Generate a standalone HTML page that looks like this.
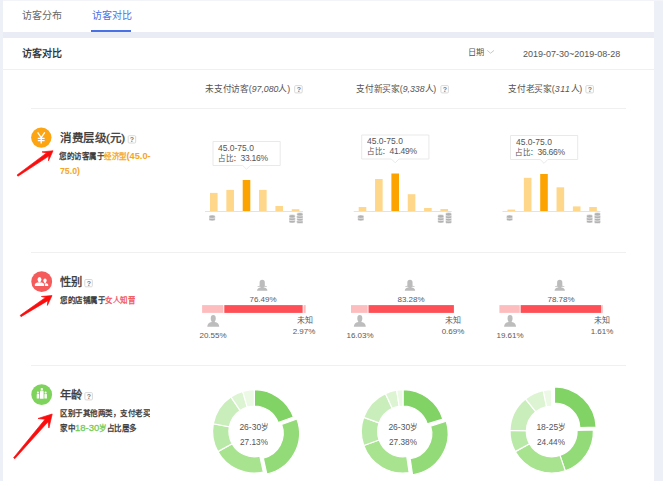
<!DOCTYPE html>
<html lang="zh-CN"><head><meta charset="utf-8">
<style>
*{margin:0;padding:0;box-sizing:border-box}
html,body{width:663px;height:481px;overflow:hidden;background:#eef0f8;font-family:"Liberation Sans",sans-serif;color:#333}
.a{position:absolute;white-space:nowrap}
.c{text-align:center}
i{font-style:italic}
svg{position:absolute;left:0;top:0}
</style></head><body>
<svg width="663" height="481" viewBox="0 0 663 481">
<rect x="3" y="0" width="660" height="1" fill="#f3f4f9"/>
<rect x="3" y="32" width="651" height="6" fill="#e9ecf4"/>
<rect x="3" y="1" width="651" height="31" fill="#fff"/>
<rect x="3" y="38" width="651" height="443" fill="#fff"/>
<rect x="91" y="30" width="40" height="2" fill="#4a70e6"/>
<rect x="3" y="69" width="651" height="1" fill="#f0f0f0"/>
<path d="M487.2 50.4 L490.6 53.2 L494 50.4" fill="none" stroke="#bbb" stroke-width="0.8"/>
<rect x="31" y="108" width="595" height="1" fill="#f0f0f0"/>
<rect x="31" y="252" width="595" height="1" fill="#f0f0f0"/>
<rect x="31" y="365" width="595" height="1" fill="#f0f0f0"/>
<rect x="294.7" y="85.6" width="7.5" height="7.300000000000001" rx="1" fill="#fff" stroke="#d4d4d4" stroke-width="0.9"/>
<rect x="440.9" y="85.6" width="7.5" height="7.300000000000001" rx="1" fill="#fff" stroke="#d4d4d4" stroke-width="0.9"/>
<rect x="585.9" y="85.6" width="7.5" height="7.300000000000001" rx="1" fill="#fff" stroke="#d4d4d4" stroke-width="0.9"/>
<rect x="128.2" y="135.7" width="7.5" height="7.300000000000001" rx="1" fill="#fff" stroke="#d4d4d4" stroke-width="0.9"/>
<rect x="84.8" y="279.5" width="7.5" height="7.300000000000001" rx="1" fill="#fff" stroke="#d4d4d4" stroke-width="0.9"/>
<rect x="84.9" y="392.6" width="7.5" height="7.300000000000001" rx="1" fill="#fff" stroke="#d4d4d4" stroke-width="0.9"/>
<circle cx="41.3" cy="137.6" r="10.2" fill="#fca412"/>
<g stroke="#fff" stroke-width="1.35" fill="none"><path d="M37.6 132.4 L41.2 137.6 L44.8 132.4 M41.2 137.6 V143.4 M37.8 138.4 H44.6 M37.8 140.6 H44.6"/></g>
<circle cx="41.7" cy="281.7" r="10.4" fill="#f55b5b"/>
<g fill="#fff"><ellipse cx="39.5" cy="279.4" rx="1.95" ry="2.5"/><rect x="38.7" y="281" width="1.6" height="1.6"/><path d="M34.9 286 V284.6 Q35.1 282.8 37.2 282.4 H41.8 Q43.9 282.8 44.1 284.6 V286 Z"/><ellipse cx="45" cy="280.6" rx="1.65" ry="2.1"/><rect x="44.3" y="282" width="1.4" height="1.4"/><path d="M44.9 286 V284.8 Q45 283.4 45.8 283.2 H46.3 Q48 283.4 48.2 284.8 V286 Z" /></g>
<circle cx="41.7" cy="394.6" r="10.4" fill="#7dd35b"/>
<g fill="#fff"><circle cx="41.8" cy="389.1" r="1.2"/><path d="M40 398.8 V391.8 Q40 390.6 41.2 390.6 H42.4 Q43.6 390.6 43.6 391.8 V398.8 Z"/><circle cx="37.9" cy="392.5" r="1.05"/><path d="M36.7 398.6 V394.7 Q36.7 393.8 37.6 393.8 H38.3 Q39.2 393.8 39.2 394.7 V398.6 Z"/><circle cx="45.6" cy="392.5" r="1.05"/><path d="M44.4 398.6 V394.7 Q44.4 393.8 45.3 393.8 H46 Q46.9 393.8 46.9 394.7 V398.6 Z"/></g>
<polygon points="53.00,150.80 42.00,151.90 46.57,152.91 17.07,174.99 17.93,176.21 48.80,156.11 48.50,160.80" fill="#fb0d0d" stroke="#fb0d0d" stroke-width="0.7" stroke-linejoin="round"/>
<polygon points="52.00,295.60 41.40,296.50 45.64,297.41 20.19,315.37 21.01,316.63 47.77,300.68 47.40,305.40" fill="#fb0d0d" stroke="#fb0d0d" stroke-width="0.7" stroke-linejoin="round"/>
<polygon points="52.20,414.00 38.00,418.50 45.08,419.29 13.63,457.71 14.77,458.69 48.04,421.83 48.90,428.00" fill="#fb0d0d" stroke="#fb0d0d" stroke-width="0.7" stroke-linejoin="round"/>
<rect x="205.0" y="211" width="98" height="0.8" fill="#dcdcdc"/>
<rect x="210.00" y="192.9" width="7.6" height="18.10" fill="#fed78a"/>
<rect x="226.35" y="189.9" width="7.6" height="21.10" fill="#fed78a"/>
<rect x="242.70" y="180" width="7.6" height="31.00" fill="#fda300"/>
<rect x="259.05" y="189.9" width="7.6" height="21.10" fill="#fed78a"/>
<rect x="275.40" y="206" width="7.6" height="5.00" fill="#fed78a"/>
<rect x="291.75" y="209.2" width="7.6" height="1.80" fill="#fed78a"/>
<path d="M209.00 218.60 A3.1 1.2 0 0 1 215.20 218.60 V219.70 A3.1 1.2 0 0 1 209.00 219.70 Z" fill="#b2b2b2" stroke="#fff" stroke-width="0.6"/>
<path d="M209.00 216.10 A3.1 1.2 0 0 1 215.20 216.10 V217.20 A3.1 1.2 0 0 1 209.00 217.20 Z" fill="#b2b2b2" stroke="#fff" stroke-width="0.6"/>
<path d="M289.00 220.80 A3.1 1.2 0 0 1 295.20 220.80 V221.90 A3.1 1.2 0 0 1 289.00 221.90 Z" fill="#b2b2b2" stroke="#fff" stroke-width="0.6"/>
<path d="M289.00 218.30 A3.1 1.2 0 0 1 295.20 218.30 V219.40 A3.1 1.2 0 0 1 289.00 219.40 Z" fill="#b2b2b2" stroke="#fff" stroke-width="0.6"/>
<path d="M289.00 215.80 A3.1 1.2 0 0 1 295.20 215.80 V216.90 A3.1 1.2 0 0 1 289.00 216.90 Z" fill="#b2b2b2" stroke="#fff" stroke-width="0.6"/>
<path d="M296.80 221.30 A3.1 1.2 0 0 1 303.00 221.30 V222.40 A3.1 1.2 0 0 1 296.80 222.40 Z" fill="#b2b2b2" stroke="#fff" stroke-width="0.6"/>
<path d="M296.80 218.80 A3.1 1.2 0 0 1 303.00 218.80 V219.90 A3.1 1.2 0 0 1 296.80 219.90 Z" fill="#b2b2b2" stroke="#fff" stroke-width="0.6"/>
<path d="M296.80 216.30 A3.1 1.2 0 0 1 303.00 216.30 V217.40 A3.1 1.2 0 0 1 296.80 217.40 Z" fill="#b2b2b2" stroke="#fff" stroke-width="0.6"/>
<path d="M296.80 213.80 A3.1 1.2 0 0 1 303.00 213.80 V214.90 A3.1 1.2 0 0 1 296.80 214.90 Z" fill="#b2b2b2" stroke="#fff" stroke-width="0.6"/>
<path d="M213.0 141.5 H280.2 V165.5 H250.3 L246.5 169.3 L242.7 165.5 H213.0 Z" fill="#fff" stroke="#e6e6e6" stroke-width="0.9"/>
<rect x="353.7" y="211" width="98" height="0.8" fill="#dcdcdc"/>
<rect x="358.70" y="207" width="7.6" height="4.00" fill="#fed78a"/>
<rect x="375.05" y="179" width="7.6" height="32.00" fill="#fed78a"/>
<rect x="391.40" y="173.5" width="7.6" height="37.50" fill="#fda300"/>
<rect x="407.75" y="194.2" width="7.6" height="16.80" fill="#fed78a"/>
<rect x="424.10" y="208" width="7.6" height="3.00" fill="#fed78a"/>
<rect x="440.45" y="209" width="7.6" height="2.00" fill="#fed78a"/>
<path d="M357.70 218.60 A3.1 1.2 0 0 1 363.90 218.60 V219.70 A3.1 1.2 0 0 1 357.70 219.70 Z" fill="#b2b2b2" stroke="#fff" stroke-width="0.6"/>
<path d="M357.70 216.10 A3.1 1.2 0 0 1 363.90 216.10 V217.20 A3.1 1.2 0 0 1 357.70 217.20 Z" fill="#b2b2b2" stroke="#fff" stroke-width="0.6"/>
<path d="M437.70 220.80 A3.1 1.2 0 0 1 443.90 220.80 V221.90 A3.1 1.2 0 0 1 437.70 221.90 Z" fill="#b2b2b2" stroke="#fff" stroke-width="0.6"/>
<path d="M437.70 218.30 A3.1 1.2 0 0 1 443.90 218.30 V219.40 A3.1 1.2 0 0 1 437.70 219.40 Z" fill="#b2b2b2" stroke="#fff" stroke-width="0.6"/>
<path d="M437.70 215.80 A3.1 1.2 0 0 1 443.90 215.80 V216.90 A3.1 1.2 0 0 1 437.70 216.90 Z" fill="#b2b2b2" stroke="#fff" stroke-width="0.6"/>
<path d="M445.50 221.30 A3.1 1.2 0 0 1 451.70 221.30 V222.40 A3.1 1.2 0 0 1 445.50 222.40 Z" fill="#b2b2b2" stroke="#fff" stroke-width="0.6"/>
<path d="M445.50 218.80 A3.1 1.2 0 0 1 451.70 218.80 V219.90 A3.1 1.2 0 0 1 445.50 219.90 Z" fill="#b2b2b2" stroke="#fff" stroke-width="0.6"/>
<path d="M445.50 216.30 A3.1 1.2 0 0 1 451.70 216.30 V217.40 A3.1 1.2 0 0 1 445.50 217.40 Z" fill="#b2b2b2" stroke="#fff" stroke-width="0.6"/>
<path d="M445.50 213.80 A3.1 1.2 0 0 1 451.70 213.80 V214.90 A3.1 1.2 0 0 1 445.50 214.90 Z" fill="#b2b2b2" stroke="#fff" stroke-width="0.6"/>
<path d="M361.7 135.0 H428.9 V159.0 H399.0 L395.2 162.8 L391.4 159.0 H361.7 Z" fill="#fff" stroke="#e6e6e6" stroke-width="0.9"/>
<rect x="502.5" y="211" width="98" height="0.8" fill="#dcdcdc"/>
<rect x="507.50" y="209.6" width="7.6" height="1.40" fill="#fed78a"/>
<rect x="523.85" y="177.8" width="7.6" height="33.20" fill="#fed78a"/>
<rect x="540.20" y="174" width="7.6" height="37.00" fill="#fda300"/>
<rect x="556.55" y="187.3" width="7.6" height="23.70" fill="#fed78a"/>
<rect x="572.90" y="206.4" width="7.6" height="4.60" fill="#fed78a"/>
<rect x="589.25" y="207" width="7.6" height="4.00" fill="#fed78a"/>
<path d="M506.50 218.60 A3.1 1.2 0 0 1 512.70 218.60 V219.70 A3.1 1.2 0 0 1 506.50 219.70 Z" fill="#b2b2b2" stroke="#fff" stroke-width="0.6"/>
<path d="M506.50 216.10 A3.1 1.2 0 0 1 512.70 216.10 V217.20 A3.1 1.2 0 0 1 506.50 217.20 Z" fill="#b2b2b2" stroke="#fff" stroke-width="0.6"/>
<path d="M586.50 220.80 A3.1 1.2 0 0 1 592.70 220.80 V221.90 A3.1 1.2 0 0 1 586.50 221.90 Z" fill="#b2b2b2" stroke="#fff" stroke-width="0.6"/>
<path d="M586.50 218.30 A3.1 1.2 0 0 1 592.70 218.30 V219.40 A3.1 1.2 0 0 1 586.50 219.40 Z" fill="#b2b2b2" stroke="#fff" stroke-width="0.6"/>
<path d="M586.50 215.80 A3.1 1.2 0 0 1 592.70 215.80 V216.90 A3.1 1.2 0 0 1 586.50 216.90 Z" fill="#b2b2b2" stroke="#fff" stroke-width="0.6"/>
<path d="M594.30 221.30 A3.1 1.2 0 0 1 600.50 221.30 V222.40 A3.1 1.2 0 0 1 594.30 222.40 Z" fill="#b2b2b2" stroke="#fff" stroke-width="0.6"/>
<path d="M594.30 218.80 A3.1 1.2 0 0 1 600.50 218.80 V219.90 A3.1 1.2 0 0 1 594.30 219.90 Z" fill="#b2b2b2" stroke="#fff" stroke-width="0.6"/>
<path d="M594.30 216.30 A3.1 1.2 0 0 1 600.50 216.30 V217.40 A3.1 1.2 0 0 1 594.30 217.40 Z" fill="#b2b2b2" stroke="#fff" stroke-width="0.6"/>
<path d="M594.30 213.80 A3.1 1.2 0 0 1 600.50 213.80 V214.90 A3.1 1.2 0 0 1 594.30 214.90 Z" fill="#b2b2b2" stroke="#fff" stroke-width="0.6"/>
<path d="M510.5 135.5 H577.7 V159.5 H547.8 L544.0 163.3 L540.2 159.5 H510.5 Z" fill="#fff" stroke="#e6e6e6" stroke-width="0.9"/>
<rect x="202.1" y="305.1" width="21.29" height="7.8" fill="#fdbdbf"/>
<rect x="224.29" y="305.1" width="78.34" height="7.8" fill="#fd4f55"/>
<rect x="303.53" y="305.1" width="2.17" height="7.8" fill="#fdbdbf"/>
<g fill="#bdbdbd"><ellipse cx="213.2449" cy="318.4" rx="2.5" ry="3.3"/><path d="M211.6449 320.8 h3.2 v1.2 Q219.0449 322.8 219.2449 326.8 H207.2449 Q207.4449 322.8 211.6449 322.0 Z"/></g>
<g fill="#bcbcbc"><path d="M259.61161999999996 282.5 A2.6 2.8 0 0 1 264.81162 282.5 V285.7 L267.01162 286.2 L266.81162 286.8 L264.41161999999997 286.7 L263.41161999999997 287.2 Q267.41161999999997 288.09999999999997 267.41161999999997 290.7 H257.01162 Q257.01162 288.09999999999997 261.01162 287.2 L260.01162 286.7 L257.61161999999996 286.8 L257.41161999999997 286.2 L259.61161999999996 285.7 Z"/></g>
<rect x="351.0" y="305.1" width="16.61" height="7.8" fill="#fdbdbf"/>
<rect x="368.51" y="305.1" width="85.38" height="7.8" fill="#fd4f55"/>
<g fill="#bdbdbd"><ellipse cx="359.80354" cy="318.4" rx="2.5" ry="3.3"/><path d="M358.20354 320.8 h3.2 v1.2 Q365.60354 322.8 365.80354 326.8 H353.80354 Q354.00354 322.8 358.20354 322.0 Z"/></g>
<g fill="#bcbcbc"><path d="M407.34612 282.5 A2.6 2.8 0 0 1 412.54612000000003 282.5 V285.7 L414.74612 286.2 L414.54612000000003 286.8 L412.14612 286.7 L411.14612 287.2 Q415.14612 288.09999999999997 415.14612 290.7 H404.74612 Q404.74612 288.09999999999997 408.74612 287.2 L407.74612 286.7 L405.34612 286.8 L405.14612 286.2 L407.34612 285.7 Z"/></g>
<rect x="499.4" y="305.1" width="20.32" height="7.8" fill="#fdbdbf"/>
<rect x="520.62" y="305.1" width="80.72" height="7.8" fill="#fd4f55"/>
<rect x="602.23" y="305.1" width="0.77" height="7.8" fill="#fdbdbf"/>
<g fill="#bdbdbd"><ellipse cx="510.05798" cy="318.4" rx="2.5" ry="3.3"/><path d="M508.45797999999996 320.8 h3.2 v1.2 Q515.85798 322.8 516.05798 326.8 H504.05798 Q504.25798 322.8 508.45797999999996 322.0 Z"/></g>
<g fill="#bcbcbc"><path d="M557.124 282.5 A2.6 2.8 0 0 1 562.3240000000001 282.5 V285.7 L564.524 286.2 L564.3240000000001 286.8 L561.9240000000001 286.7 L560.9240000000001 287.2 Q564.9240000000001 288.09999999999997 564.9240000000001 290.7 H554.524 Q554.524 288.09999999999997 558.524 287.2 L557.524 286.7 L555.124 286.8 L554.9240000000001 286.2 L557.124 285.7 Z"/></g>
<path d="M254.30 389.70 A41.7 41.7 0 0 1 293.44 417.00 L278.14 422.63 A25.4 25.4 0 0 0 254.30 406.00 Z" fill="#80d364" stroke="#fff" stroke-width="1.2" stroke-linejoin="miter"/>
<path d="M296.95 418.92 A41.7 41.7 0 0 1 266.84 474.03 L263.31 458.12 A25.4 25.4 0 0 0 281.65 424.55 Z" fill="#93db78" stroke="#fff" stroke-width="1.2" stroke-linejoin="miter"/>
<path d="M263.33 472.11 A41.7 41.7 0 0 1 217.83 451.62 L232.08 443.71 A25.4 25.4 0 0 0 259.80 456.20 Z" fill="#a8e390" stroke="#fff" stroke-width="1.2" stroke-linejoin="miter"/>
<path d="M217.83 451.62 A41.7 41.7 0 0 1 213.31 423.73 L229.33 426.73 A25.4 25.4 0 0 0 232.08 443.71 Z" fill="#b9e9a6" stroke="#fff" stroke-width="1.2" stroke-linejoin="miter"/>
<path d="M213.31 423.73 A41.7 41.7 0 0 1 230.86 396.91 L240.02 410.39 A25.4 25.4 0 0 0 229.33 426.73 Z" fill="#c9eebb" stroke="#fff" stroke-width="1.2" stroke-linejoin="miter"/>
<path d="M230.86 396.91 A41.7 41.7 0 0 1 242.67 391.36 L247.21 407.01 A25.4 25.4 0 0 0 240.02 410.39 Z" fill="#dcf4d2" stroke="#fff" stroke-width="1.2" stroke-linejoin="miter"/>
<path d="M242.67 391.36 A41.7 41.7 0 0 1 254.30 389.70 L254.30 406.00 A25.4 25.4 0 0 0 247.21 407.01 Z" fill="#ebf9e5" stroke="#fff" stroke-width="1.2" stroke-linejoin="miter"/>
<path d="M403.00 389.70 A41.7 41.7 0 0 1 442.86 419.14 L427.28 423.93 A25.4 25.4 0 0 0 403.00 406.00 Z" fill="#80d364" stroke="#fff" stroke-width="1.2" stroke-linejoin="miter"/>
<path d="M446.24 421.27 A41.7 41.7 0 0 1 412.55 474.77 L410.14 458.65 A25.4 25.4 0 0 0 430.66 426.06 Z" fill="#93db78" stroke="#fff" stroke-width="1.2" stroke-linejoin="miter"/>
<path d="M409.16 472.64 A41.7 41.7 0 0 1 363.74 445.46 L379.09 439.96 A25.4 25.4 0 0 0 406.75 456.52 Z" fill="#a8e390" stroke="#fff" stroke-width="1.2" stroke-linejoin="miter"/>
<path d="M363.74 445.46 A41.7 41.7 0 0 1 363.72 417.41 L379.07 422.88 A25.4 25.4 0 0 0 379.09 439.96 Z" fill="#b9e9a6" stroke="#fff" stroke-width="1.2" stroke-linejoin="miter"/>
<path d="M363.72 417.41 A41.7 41.7 0 0 1 385.38 393.61 L392.27 408.38 A25.4 25.4 0 0 0 379.07 422.88 Z" fill="#c9eebb" stroke="#fff" stroke-width="1.2" stroke-linejoin="miter"/>
<path d="M385.38 393.61 A41.7 41.7 0 0 1 396.69 390.18 L399.16 406.29 A25.4 25.4 0 0 0 392.27 408.38 Z" fill="#dcf4d2" stroke="#fff" stroke-width="1.2" stroke-linejoin="miter"/>
<path d="M396.69 390.18 A41.7 41.7 0 0 1 403.00 389.70 L403.00 406.00 A25.4 25.4 0 0 0 399.16 406.29 Z" fill="#ebf9e5" stroke="#fff" stroke-width="1.2" stroke-linejoin="miter"/>
<path d="M554.48 386.82 A41.7 41.7 0 0 1 596.15 427.07 L579.86 427.64 A25.4 25.4 0 0 0 554.48 403.12 Z" fill="#80d364" stroke="#fff" stroke-width="1.2" stroke-linejoin="miter"/>
<path d="M593.37 429.94 A41.7 41.7 0 0 1 565.28 470.83 L559.97 455.42 A25.4 25.4 0 0 0 577.08 430.51 Z" fill="#93db78" stroke="#fff" stroke-width="1.2" stroke-linejoin="miter"/>
<path d="M565.28 470.83 A41.7 41.7 0 0 1 515.23 451.62 L529.48 443.71 A25.4 25.4 0 0 0 559.97 455.42 Z" fill="#a8e390" stroke="#fff" stroke-width="1.2" stroke-linejoin="miter"/>
<path d="M515.23 451.62 A41.7 41.7 0 0 1 510.01 430.31 L526.31 430.74 A25.4 25.4 0 0 0 529.48 443.71 Z" fill="#b9e9a6" stroke="#fff" stroke-width="1.2" stroke-linejoin="miter"/>
<path d="M510.01 430.31 A41.7 41.7 0 0 1 525.46 398.99 L535.72 411.66 A25.4 25.4 0 0 0 526.31 430.74 Z" fill="#c9eebb" stroke="#fff" stroke-width="1.2" stroke-linejoin="miter"/>
<path d="M525.46 398.99 A41.7 41.7 0 0 1 543.24 390.57 L546.55 406.53 A25.4 25.4 0 0 0 535.72 411.66 Z" fill="#dcf4d2" stroke="#fff" stroke-width="1.2" stroke-linejoin="miter"/>
<path d="M543.24 390.57 A41.7 41.7 0 0 1 551.70 389.70 L551.70 406.00 A25.4 25.4 0 0 0 546.55 406.53 Z" fill="#ebf9e5" stroke="#fff" stroke-width="1.2" stroke-linejoin="miter"/>
</svg>
<div class="a" style="left:293.55px;top:86.1px;font-size:28px;line-height:28px;color:#7a7a7a;font-weight:normal;width:40px;text-align:center;transform:scale(0.25);transform-origin:0 0;font-weight:bold">?</div>
<div class="a" style="left:439.75px;top:86.1px;font-size:28px;line-height:28px;color:#7a7a7a;font-weight:normal;width:40px;text-align:center;transform:scale(0.25);transform-origin:0 0;font-weight:bold">?</div>
<div class="a" style="left:584.75px;top:86.1px;font-size:28px;line-height:28px;color:#7a7a7a;font-weight:normal;width:40px;text-align:center;transform:scale(0.25);transform-origin:0 0;font-weight:bold">?</div>
<div class="a" style="left:127.05px;top:136.2px;font-size:28px;line-height:28px;color:#7a7a7a;font-weight:normal;width:40px;text-align:center;transform:scale(0.25);transform-origin:0 0;font-weight:bold">?</div>
<div class="a" style="left:83.65px;top:280.0px;font-size:28px;line-height:28px;color:#7a7a7a;font-weight:normal;width:40px;text-align:center;transform:scale(0.25);transform-origin:0 0;font-weight:bold">?</div>
<div class="a" style="left:83.75px;top:393.1px;font-size:28px;line-height:28px;color:#7a7a7a;font-weight:normal;width:40px;text-align:center;transform:scale(0.25);transform-origin:0 0;font-weight:bold">?</div>
<div class="a" style="left:22px;top:10px;font-size:40px;line-height:40px;color:#666;font-weight:normal;transform:scale(0.25);transform-origin:0 0;">访客分布</div>
<div class="a" style="left:91.5px;top:10px;font-size:40px;line-height:40px;color:#4a70e6;font-weight:normal;transform:scale(0.25);transform-origin:0 0;">访客对比</div>
<div class="a" style="left:22.3px;top:48.2px;font-size:40px;line-height:40px;color:#333;font-weight:bold;transform:scale(0.25);transform-origin:0 0;">访客对比</div>
<div class="a" style="left:467.6px;top:47.9px;font-size:33px;line-height:33px;color:#555;font-weight:normal;transform:scale(0.25);transform-origin:0 0;">日期</div>
<div class="a" style="left:522.5px;top:49.3px;font-size:36px;line-height:36px;color:#555;font-weight:normal;transform:scale(0.25);transform-origin:0 0;">2019-07-30~2019-08-28</div>
<div class="a" style="left:205px;top:84.2px;font-size:35px;line-height:35px;color:#555;font-weight:normal;transform:scale(0.25);transform-origin:0 0;">未支付访客(<i>97,080</i>人)</div>
<div class="a" style="left:356.3px;top:84.2px;font-size:35px;line-height:35px;color:#555;font-weight:normal;transform:scale(0.25);transform-origin:0 0;">支付新买家(<i>9,338</i>人)</div>
<div class="a" style="left:508.3px;top:84.2px;font-size:35px;line-height:35px;color:#555;font-weight:normal;transform:scale(0.25);transform-origin:0 0;">支付老买家(<i><span style="letter-spacing:2.6px">311</span></i>人)</div>
<div class="a" style="left:59.5px;top:131.6px;font-size:46px;line-height:46px;color:#383838;font-weight:normal;transform:scale(0.25);transform-origin:0 0;-webkit-text-stroke:1.4px #383838">消费层级(元)</div>
<div class="a" style="left:59.3px;top:152.3px;font-size:30px;line-height:30px;color:#333;font-weight:normal;transform:scale(0.25);transform-origin:0 0;-webkit-text-stroke:1.1px #333">您的访客属于<span style="color:#f5a623;-webkit-text-stroke-color:#f5a623">经济型<b style="font-size:37px;-webkit-text-stroke:0">(45.0-</b></span></div>
<div class="a" style="left:59.6px;top:166.2px;font-size:35px;line-height:35px;color:#333;font-weight:bold;transform:scale(0.25);transform-origin:0 0;"><span style="color:#f5a623">75.0)</span></div>
<div class="a" style="left:59.8px;top:275.6px;font-size:45px;line-height:45px;color:#383838;font-weight:normal;transform:scale(0.25);transform-origin:0 0;-webkit-text-stroke:1.4px #383838">性别</div>
<div class="a" style="left:59.8px;top:296.5px;font-size:30px;line-height:30px;color:#333;font-weight:normal;transform:scale(0.25);transform-origin:0 0;-webkit-text-stroke:1.1px #333">您的店铺属于<span style="color:#f2545b;-webkit-text-stroke-color:#f2545b">女人知音</span></div>
<div class="a" style="left:59.8px;top:388.6px;font-size:45px;line-height:45px;color:#383838;font-weight:normal;transform:scale(0.25);transform-origin:0 0;-webkit-text-stroke:1.4px #383838">年龄</div>
<div class="a" style="left:59.5px;top:409.8px;font-size:30px;line-height:30px;color:#333;font-weight:normal;transform:scale(0.25);transform-origin:0 0;-webkit-text-stroke:1.1px #333">区别于其他两类，支付老买</div>
<div class="a" style="left:59.5px;top:424.3px;font-size:30px;line-height:30px;color:#333;font-weight:normal;transform:scale(0.25);transform-origin:0 0;-webkit-text-stroke:1.1px #333">家中<span style="color:#72cc4e;-webkit-text-stroke-color:#72cc4e"><span style="font-size:38px">18-30</span>岁</span>占比居多</div>
<div class="a" style="left:218.0px;top:143.5px;font-size:34px;line-height:34px;color:#555;font-weight:normal;transform:scale(0.25);transform-origin:0 0;">45.0-75.0</div>
<div class="a" style="left:217.8px;top:153.6px;font-size:34px;line-height:34px;color:#555;font-weight:normal;transform:scale(0.25);transform-origin:0 0;"><span style="font-size:30px">占比：</span><span style="letter-spacing:-1px">33.16%</span></div>
<div class="a" style="left:366.7px;top:137.0px;font-size:34px;line-height:34px;color:#555;font-weight:normal;transform:scale(0.25);transform-origin:0 0;">45.0-75.0</div>
<div class="a" style="left:366.5px;top:147.1px;font-size:34px;line-height:34px;color:#555;font-weight:normal;transform:scale(0.25);transform-origin:0 0;"><span style="font-size:30px">占比：</span><span style="letter-spacing:-1px">41.49%</span></div>
<div class="a" style="left:515.5px;top:137.5px;font-size:34px;line-height:34px;color:#555;font-weight:normal;transform:scale(0.25);transform-origin:0 0;">45.0-75.0</div>
<div class="a" style="left:515.3px;top:147.6px;font-size:34px;line-height:34px;color:#555;font-weight:normal;transform:scale(0.25);transform-origin:0 0;"><span style="font-size:30px">占比：</span><span style="letter-spacing:-1px">36.66%</span></div>
<div class="a" style="left:183.04px;top:330.7px;font-size:32px;line-height:32px;color:#5a5a5a;font-weight:normal;width:240px;text-align:center;transform:scale(0.25);transform-origin:0 0;">20.55%</div>
<div class="a" style="left:233.21px;top:294.6px;font-size:32px;line-height:32px;color:#5a5a5a;font-weight:normal;width:240px;text-align:center;transform:scale(0.25);transform-origin:0 0;">76.49%</div>
<div class="a" style="left:274.5px;top:316.3px;font-size:32px;line-height:32px;color:#5a5a5a;font-weight:normal;width:240px;text-align:center;transform:scale(0.25);transform-origin:0 0;">未知</div>
<div class="a" style="left:274.3px;top:326.6px;font-size:32px;line-height:32px;color:#5a5a5a;font-weight:normal;width:240px;text-align:center;transform:scale(0.25);transform-origin:0 0;">2.97%</div>
<div class="a" style="left:329.6px;top:330.7px;font-size:32px;line-height:32px;color:#5a5a5a;font-weight:normal;width:240px;text-align:center;transform:scale(0.25);transform-origin:0 0;">16.03%</div>
<div class="a" style="left:380.95px;top:294.6px;font-size:32px;line-height:32px;color:#5a5a5a;font-weight:normal;width:240px;text-align:center;transform:scale(0.25);transform-origin:0 0;">83.28%</div>
<div class="a" style="left:423.4px;top:316.3px;font-size:32px;line-height:32px;color:#5a5a5a;font-weight:normal;width:240px;text-align:center;transform:scale(0.25);transform-origin:0 0;">未知</div>
<div class="a" style="left:423.2px;top:326.6px;font-size:32px;line-height:32px;color:#5a5a5a;font-weight:normal;width:240px;text-align:center;transform:scale(0.25);transform-origin:0 0;">0.69%</div>
<div class="a" style="left:479.86px;top:330.7px;font-size:32px;line-height:32px;color:#5a5a5a;font-weight:normal;width:240px;text-align:center;transform:scale(0.25);transform-origin:0 0;">19.61%</div>
<div class="a" style="left:530.72px;top:294.6px;font-size:32px;line-height:32px;color:#5a5a5a;font-weight:normal;width:240px;text-align:center;transform:scale(0.25);transform-origin:0 0;">78.78%</div>
<div class="a" style="left:571.8px;top:316.3px;font-size:32px;line-height:32px;color:#5a5a5a;font-weight:normal;width:240px;text-align:center;transform:scale(0.25);transform-origin:0 0;">未知</div>
<div class="a" style="left:571.6px;top:326.6px;font-size:32px;line-height:32px;color:#5a5a5a;font-weight:normal;width:240px;text-align:center;transform:scale(0.25);transform-origin:0 0;">1.61%</div>
<div class="a" style="left:223.8px;top:422.5px;font-size:30px;line-height:30px;color:#555;font-weight:normal;width:240px;text-align:center;transform:scale(0.25);transform-origin:0 0;"><span style="font-size:34px">26-30</span>岁</div>
<div class="a" style="left:224.0px;top:437.7px;font-size:33px;line-height:33px;color:#555;font-weight:normal;width:240px;text-align:center;transform:scale(0.25);transform-origin:0 0;">27.13%</div>
<div class="a" style="left:372.5px;top:422.5px;font-size:30px;line-height:30px;color:#555;font-weight:normal;width:240px;text-align:center;transform:scale(0.25);transform-origin:0 0;"><span style="font-size:34px">26-30</span>岁</div>
<div class="a" style="left:372.7px;top:437.7px;font-size:33px;line-height:33px;color:#555;font-weight:normal;width:240px;text-align:center;transform:scale(0.25);transform-origin:0 0;">27.38%</div>
<div class="a" style="left:521.2px;top:422.5px;font-size:30px;line-height:30px;color:#555;font-weight:normal;width:240px;text-align:center;transform:scale(0.25);transform-origin:0 0;"><span style="font-size:34px">18-25</span>岁</div>
<div class="a" style="left:521.4px;top:437.7px;font-size:33px;line-height:33px;color:#555;font-weight:normal;width:240px;text-align:center;transform:scale(0.25);transform-origin:0 0;">24.44%</div>
</body></html>
